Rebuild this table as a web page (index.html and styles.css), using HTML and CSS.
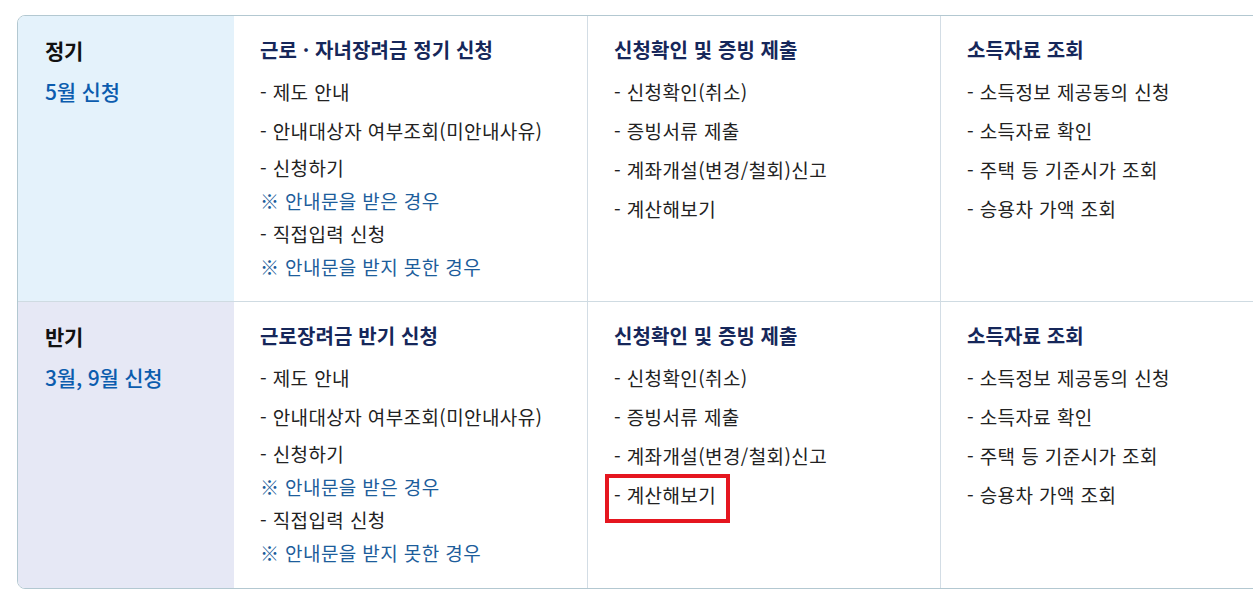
FILE: index.html
```html
<!DOCTYPE html>
<html lang="ko">
<head>
<meta charset="utf-8">
<title>근로·자녀장려금 신청</title>
<link rel="stylesheet" href="styles.css">
</head>
<body>
<div class="board">
  <div class="row">
    <div class="side side-blue">
      <div class="side-title">정기</div>
      <div class="side-sub">5월 신청</div>
    </div>
    <div class="col">
      <h3 class="col-title">근로 · 자녀장려금 정기 신청</h3>
      <ul class="list">
        <li>- 제도 안내</li>
        <li>- 안내대상자 여부조회(미안내사유)</li>
        <li class="group">
          <span>- 신청하기</span>
          <span class="note">※ 안내문을 받은 경우</span>
          <span>- 직접입력 신청</span>
          <span class="note">※ 안내문을 받지 못한 경우</span>
        </li>
      </ul>
    </div>
    <div class="col">
      <h3 class="col-title">신청확인 및 증빙 제출</h3>
      <ul class="list">
        <li>- 신청확인(취소)</li>
        <li>- 증빙서류 제출</li>
        <li>- 계좌개설(변경/철회)신고</li>
        <li>- 계산해보기</li>
      </ul>
    </div>
    <div class="col">
      <h3 class="col-title">소득자료 조회</h3>
      <ul class="list">
        <li>- 소득정보 제공동의 신청</li>
        <li>- 소득자료 확인</li>
        <li>- 주택 등 기준시가 조회</li>
        <li>- 승용차 가액 조회</li>
      </ul>
    </div>
  </div>
  <div class="row">
    <div class="side side-violet">
      <div class="side-title">반기</div>
      <div class="side-sub">3월, 9월 신청</div>
    </div>
    <div class="col">
      <h3 class="col-title">근로장려금 반기 신청</h3>
      <ul class="list">
        <li>- 제도 안내</li>
        <li>- 안내대상자 여부조회(미안내사유)</li>
        <li class="group">
          <span>- 신청하기</span>
          <span class="note">※ 안내문을 받은 경우</span>
          <span>- 직접입력 신청</span>
          <span class="note">※ 안내문을 받지 못한 경우</span>
        </li>
      </ul>
    </div>
    <div class="col">
      <h3 class="col-title">신청확인 및 증빙 제출</h3>
      <ul class="list">
        <li>- 신청확인(취소)</li>
        <li>- 증빙서류 제출</li>
        <li>- 계좌개설(변경/철회)신고</li>
        <li class="marked">- 계산해보기</li>
      </ul>
    </div>
    <div class="col">
      <h3 class="col-title">소득자료 조회</h3>
      <ul class="list">
        <li>- 소득정보 제공동의 신청</li>
        <li>- 소득자료 확인</li>
        <li>- 주택 등 기준시가 조회</li>
        <li>- 승용차 가액 조회</li>
      </ul>
    </div>
  </div>
</div>
</body>
</html>
```

FILE: styles.css
```css
html, body {
  margin: 0;
  padding: 0;
  overflow: hidden;
  background: #ffffff;
}

body {
  padding: 15px 0 0 17px;
  font-family: "Noto Sans CJK KR", "Noto Sans", sans-serif;
  color: #222222;
}

.board {
  width: 1300px;
  border: 1px solid #b3c8d1;
  border-radius: 8px;
  overflow: hidden;
}

.row {
  display: grid;
  grid-template-columns: 216px 353px 353px 378px;
}

.row + .row {
  border-top: 1px solid #cfdbe2;
}

.row:first-child {
  height: 285px;
}

.row:last-child {
  height: 286px;
}

.side {
  padding: 20px 0 0 27px;
}

.side-blue {
  background: #e4f2fb;
}

.side-violet {
  background: #e6e8f5;
}

.side-title {
  font-size: 21px;
  font-weight: 700;
  line-height: 28px;
  color: #111111;
  letter-spacing: -0.3px;
}

.side-sub {
  margin-top: 13px;
  font-size: 21px;
  font-weight: 500;
  line-height: 28px;
  color: #0b5cae;
  letter-spacing: -0.2px;
}

.col {
  padding: 20px 0 0 26px;
}

.col + .col {
  border-left: 1px solid #d3dde5;
}

.col-title {
  margin: 0;
  font-size: 20px;
  font-weight: 600;
  line-height: 28px;
  color: #16275a;
  letter-spacing: 0.1px;
}

.list {
  list-style: none;
  margin: 11px 0 0;
  padding: 0;
  display: flex;
  flex-direction: column;
  gap: 6px;
}

.list li {
  font-size: 19px;
  line-height: 33px;
  color: #222222;
  letter-spacing: 0.4px;
}

.group {
  display: flex;
  flex-direction: column;
  margin-top: -2px;
}

.note {
  color: #1d5d9b;
}

.marked {
  position: relative;
}

.marked::after {
  content: "";
  position: absolute;
  left: -9px;
  top: -4px;
  width: 117px;
  height: 41px;
  border: 4px solid #e5161f;
}
```
